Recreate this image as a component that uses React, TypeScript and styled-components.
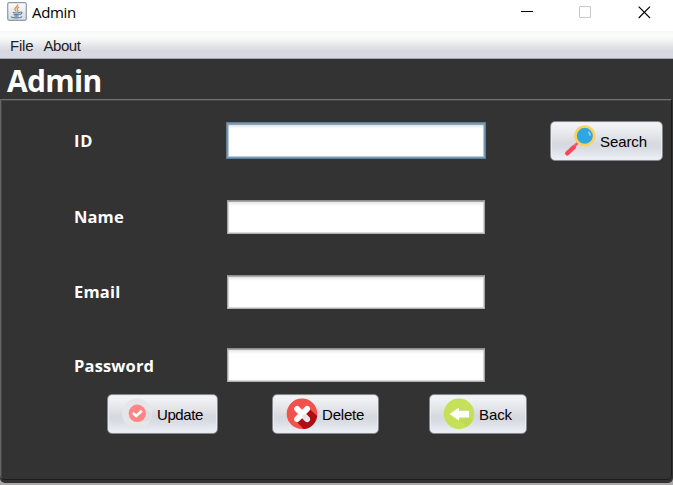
import React from "react";
import styled, { createGlobalStyle } from "styled-components";

const GlobalStyle = createGlobalStyle`
  * { box-sizing: border-box; }
  html, body, #root { margin: 0; width: 673px; height: 485px; overflow: hidden; }
  body { background: #a9a7a7; }
`;

const Window = styled.div`
  width: 673px;
  height: 485px;
  display: flex;
  flex-direction: column;
  overflow: hidden;
  background: #a9a7a7;
`;

const TitleBar = styled.header`
  flex: none;
  height: 31px;
  display: flex;
  align-items: flex-start;
  background: #fff;
  padding: 2px 22px 0 7px;
`;

const WindowTitle = styled.span`
  margin: -1px 0 0 5px;
  flex: 1;
  color: #000;
  font: 15px/22px "Open Sans", sans-serif;
  letter-spacing: -0.35px;
`;

const Controls = styled.div`
  display: flex;
  gap: 46px;
  padding-top: 4px;
`;

const Control = styled.svg`
  display: block;
  width: 13px;
  height: 13px;
`;

const MenuBar = styled.nav`
  flex: none;
  height: 28px;
  display: flex;
  gap: 10px;
  padding: 1px 10px 0;
  background: linear-gradient(#f5f7f9 0, #fbfcfb 5px, #f4f6f6 9px, #e5e7e9 14px, #d6d9df 20px, #d7dae3 100%);
  border-bottom: 1px solid #a5a7b1;
`;

const MenuItem = styled.span<{ $tracking: number }>`
  color: #202022;
  font: 15px/28px "Liberation Sans", sans-serif;
  letter-spacing: ${(p) => p.$tracking}px;
`;

const Body = styled.main`
  flex: none;
  height: 424px;
  background: #333;
  border-radius: 0 0 5px 5px;
`;

const Heading = styled.h1`
  margin: 0;
  height: 40px;
  padding: 2px 0 0 7px;
  color: #fff;
  font: 700 30px/40px "Open Sans", sans-serif;
  letter-spacing: -0.7px;
`;

const Panel = styled.section`
  width: 672px;
  height: 381px;
  border: 1px solid;
  border-color: #707070 #1c1c1c #1c1c1c #656565;
  border-radius: 1px 1px 5px 5px;
  box-shadow: inset 1px 1px 0 #454545;
  padding: 21px 8px 0 73px;
`;

const FormRow = styled.div<{ $top?: number; $height: number }>`
  margin-top: ${(p) => p.$top ?? 0}px;
  height: ${(p) => p.$height}px;
  display: flex;
  align-items: center;
`;

const Label = styled.label<{ $tracking: number; $drop?: number }>`
  width: 153px;
  padding-top: ${(p) => p.$drop ?? 0}px;
  color: #fff;
  font: 700 16.5px/24px "Open Sans", sans-serif;
  letter-spacing: ${(p) => p.$tracking}px;
`;

const Field = styled.input`
  appearance: none;
  outline: none;
  width: 258px;
  height: 34px;
  padding: 0 6px;
  background: linear-gradient(#c9c9c9 0, #e3e3e3 1px, #f4f4f4 3px, #fff 5px);
  border: 1px solid;
  border-color: #8f8d8f #a5a5a5 #b0b0b0;
  border-radius: 0;
  box-shadow: inset 0 1px 0 #aaa7aa, inset 1px 0 0 #d5d5d5, inset -1px 0 0 #d5d5d5, inset 0 -1px 0 #d9d9d9;
  font: 15px "Liberation Sans", sans-serif;
`;

const FocusedField = styled(Field)`
  align-self: flex-start;
  width: 260px;
  height: 37px;
  margin: 1px 0 0 -1px;
  border: 2px solid #729abb;
  outline: 1px solid #5f7f99;
  outline-offset: -1px;
  box-shadow: inset 0 1px 0 #969ea5, inset 1px 0 0 #b9c3cc, inset -1px 0 0 #b9c3cc, inset 0 -1px 0 #c5ccd2;
`;

const Actions = styled.div`
  display: flex;
  margin: 12px 0 0 33px;
`;

const Button = styled.button<{ $width: number; $gap?: number; $tracking?: number }>`
  flex: none;
  width: ${(p) => p.$width}px;
  height: 40px;
  margin-left: ${(p) => p.$gap ?? 0}px;
  padding: 0 0 0 13px;
  display: flex;
  align-items: center;
  gap: 4px;
  border: 1px solid #85888c;
  border-radius: 5px;
  background: linear-gradient(#f5f6f8 0, #e7e9ec 28%, #d6d9df 56%, #d8dbe1 68%, #edf1f8 100%);
  box-shadow: inset 0 0 0 1px #e9ebef;
  color: #000;
  font: 15px/20px "Liberation Sans", sans-serif;
  letter-spacing: ${(p) => p.$tracking ?? 0}px;
`;

const Caption = styled.span`
  padding-top: 2px;
`;

const Icon = styled.svg`
  flex: none;
  display: block;
  width: 32px;
  height: 32px;
`;

const AppIcon = styled.svg`
  flex: none;
  display: block;
  width: 20px;
  height: 19px;
`;

function JavaIcon() {
  return (
    <AppIcon viewBox="0 0 20 19" fill="none">
      <defs>
        <linearGradient id="tile" x2="0" y2="1">
          <stop stopColor="#fdfdfd" />
          <stop offset="1" stopColor="#d3dae0" />
        </linearGradient>
      </defs>
      <rect x=".7" y=".7" width="18.6" height="17.6" rx="1.5" fill="url(#tile)" stroke="#8b9bab" strokeWidth="1.2" />
      <path d="M10.7 2.5c.8 2-3.8 3-2.8 5 .3.8 1.1 1.2 1.2 2M12.2 5c-2.2 1-2.5 1.7-1.4 3 .4.7-.1 1.2-.5 1.6" stroke="#e88a3c" strokeWidth="1.3" />
      <path d="M5.8 10.3c1.8.8 5.2.7 7.4 0M6.4 12c1.8.7 4.4.7 6 0M7.1 13.7c1.5.5 3.2.5 4.6 0M13.2 10.2c2.7-.8 2 2-.5 2.4M4.6 14.5c-1.4 1.4 8.8 2.3 10.4 0" stroke="#587d9b" strokeWidth="1.1" />
    </AppIcon>
  );
}

function SearchIcon() {
  return (
    <Icon viewBox="0 0 32 32">
      <path d="M3.2 28.3 10 22" stroke="#fb4558" strokeWidth="4.4" strokeLinecap="round" />
      <path d="m10 21.5 4.2-4.2" stroke="#fb5463" strokeWidth="2.5" />
      <circle cx="20.8" cy="10.8" r="9.3" fill="#30a8df" stroke="#ffd15d" strokeWidth="2.6" />
      <path d="M24 7.2c1.6.4 2.3 1.8 1.7 3.4" fill="none" stroke="#8bd5f5" strokeWidth="1.7" />
    </Icon>
  );
}

function UpdateIcon() {
  return (
    <Icon viewBox="0 0 32 32">
      <circle cx="16" cy="15.5" r="15" fill="#e6e6e9" />
      <path d="m22 9 9 7c-.5 3-1.5 5-3 7l-10 1z" fill="#dcdee2" />
      <circle cx="16.3" cy="15.3" r="8.7" fill="#ff8587" />
      <path d="m12 15 3.2 3 5.6-5.2" fill="none" stroke="#fff" strokeWidth="2.6" />
    </Icon>
  );
}

function DeleteIcon() {
  return (
    <Icon viewBox="0 0 32 32">
      <circle cx="16" cy="15.8" r="15.3" fill="#f1524c" />
      <path d="m22.5 10 8.7 8C30 26 24 31 17.5 31.1L10 23z" fill="#ae0d13" />
      <path d="m11.2 11 9.8 10M21 11 11.2 21" stroke="#fff" strokeWidth="6" strokeLinecap="round" />
      <path d="m18.8 18.8 2.2 2.2" stroke="#d8d8dc" strokeWidth="5" strokeLinecap="round" opacity=".6" />
    </Icon>
  );
}

function BackIcon() {
  return (
    <Icon viewBox="0 0 32 32">
      <circle cx="16" cy="15.8" r="15.3" fill="#c5e15a" />
      <path d="m16 22 9.5-3 4 3.5A15.3 15.3 0 0 1 24 28.8z" fill="#bfdb56" />
      <path d="M6.5 16 16 9.5v3.2h10v6.8H16v3z" fill="#fff" />
    </Icon>
  );
}

export default function App() {
  return (
    <Window>
      <GlobalStyle />
      <TitleBar>
        <JavaIcon />
        <WindowTitle>Admin</WindowTitle>
        <Controls>
          <Control viewBox="0 0 13 13"><path d="M1 5.5h12" stroke="#000" /></Control>
          <Control viewBox="0 0 13 13"><rect x=".5" y=".5" width="11" height="11" rx=".5" fill="none" stroke="#c9c9c9" /></Control>
          <Control viewBox="0 0 13 13"><path d="m.7.7 11.3 11.3M12 .7.7 12" stroke="#000" strokeWidth="1.15" /></Control>
        </Controls>
      </TitleBar>
      <MenuBar>
        <MenuItem $tracking={-0.2}>File</MenuItem>
        <MenuItem $tracking={-0.4}>About</MenuItem>
      </MenuBar>
      <Body>
        <Heading>Admin</Heading>
        <Panel>
          <FormRow $height={40}>
            <Label htmlFor="id" $tracking={0.7}>ID</Label>
            <FocusedField id="id" />
            <Button $width={113} $gap={64} $tracking={-0.1}><SearchIcon /><Caption>Search</Caption></Button>
          </FormRow>
          <FormRow $top={39} $height={34}>
            <Label htmlFor="name" $tracking={0.1}>Name</Label>
            <Field id="name" />
          </FormRow>
          <FormRow $top={41} $height={34}>
            <Label htmlFor="email" $tracking={0.2}>Email</Label>
            <Field id="email" />
          </FormRow>
          <FormRow $top={39} $height={34}>
            <Label htmlFor="password" $tracking={0.15} $drop={2}>Password</Label>
            <Field id="password" type="password" />
          </FormRow>
          <Actions>
            <Button $width={111} $tracking={-0.4}><UpdateIcon /><Caption>Update</Caption></Button>
            <Button $width={107} $gap={54} $tracking={-0.2}><DeleteIcon /><Caption>Delete</Caption></Button>
            <Button $width={98} $gap={50} $tracking={-0.1}><BackIcon /><Caption>Back</Caption></Button>
          </Actions>
        </Panel>
      </Body>
    </Window>
  );
}
